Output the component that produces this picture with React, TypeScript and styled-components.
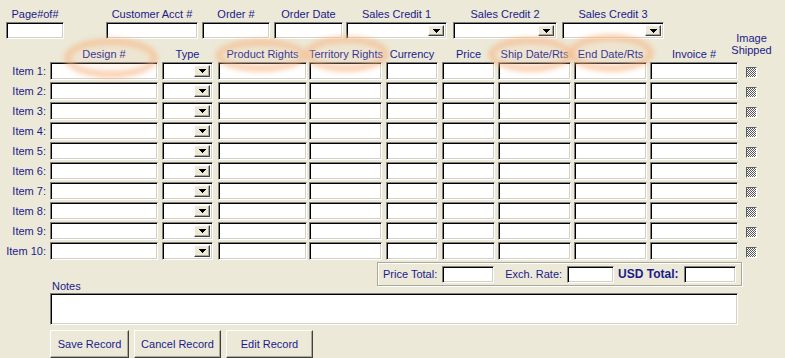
import React from "react";
import styled, { createGlobalStyle } from "styled-components";

const GlobalStyle = createGlobalStyle`
  html, body { margin: 0; padding: 0; background: #ece9d8; overflow: hidden; }
  body { font-family: "Liberation Sans", Arial, sans-serif; font-size: 11px; color: #1a1a8a; }
`;

const Form = styled.div`
  position: relative;
  width: 785px;
  height: 358px;
  overflow: hidden;
  background: #ece9d8;
`;

const TopRow = styled.div`
  display: flex;
  padding-top: 7px;
`;

const Field = styled.div<{ $w: number; $ml: number }>`
  display: flex;
  flex-direction: column;
  width: ${(p) => p.$w}px;
  margin-left: ${(p) => p.$ml}px;
`;

const FieldLabel = styled.div`
  line-height: 14px;
  height: 14px;
  text-align: center;
  white-space: nowrap;
  margin-bottom: 1px;
`;

const TextBox = styled.input<{ $w?: number; $h?: number }>`
  box-sizing: border-box;
  width: ${(p) => (p.$w ? `${p.$w}px` : "100%")};
  height: ${(p) => p.$h ?? 18}px;
  margin: 0;
  padding: 0 2px;
  background: #fff;
  border: 1px solid;
  border-color: #808080 #fff #fff #808080;
  box-shadow: inset 1px 1px 0 #000, inset -1px -1px 0 #d4d0c8;
  font: inherit;
  outline: none;
`;

const Combo = styled.div<{ $w?: number; $h?: number }>`
  box-sizing: border-box;
  display: flex;
  justify-content: flex-end;
  align-items: stretch;
  width: ${(p) => (p.$w ? `${p.$w}px` : "100%")};
  height: ${(p) => p.$h ?? 18}px;
  padding: 2px;
  background: #fff;
  border: 1px solid;
  border-color: #808080 #fff #fff #808080;
  box-shadow: inset 1px 1px 0 #000, inset -1px -1px 0 #d4d0c8;
`;

const DropButton = styled.div`
  box-sizing: border-box;
  width: 16px;
  display: flex;
  align-items: center;
  justify-content: center;
  background: #ece9d8;
  border: 1px solid;
  border-color: #fff #404040 #404040 #fff;
  box-shadow: inset -1px -1px 0 #aca899;
`;

const Arrow = () => (
  <svg width="7" height="4" viewBox="0 0 7 4" shapeRendering="crispEdges">
    <path d="M0 0h7v1H0zM1 1h5v1H1zM2 2h3v1H2zM3 3h1v1H3z" fill="#000" />
  </svg>
);

const ComboBox: React.FC<{ $w?: number; $h?: number }> = (p) => (
  <Combo $w={p.$w} $h={p.$h}>
    <DropButton>
      <Arrow />
    </DropButton>
  </Combo>
);

const ItemGrid = styled.div`
  display: grid;
  grid-template-columns: 50px 112px 56px 91px 77px 56px 56px 76px 76px 96px 11px;
  grid-template-rows: 23px repeat(10, 20px);
  align-items: start;
`;

const HeaderLabel = styled.div<{ $w: number }>`
  align-self: end;
  width: ${(p) => p.$w}px;
  line-height: 16px;
  text-align: center;
  white-space: nowrap;
`;

const ShippedHeader = styled.div`
  align-self: end;
  justify-self: center;
  margin-bottom: 6px;
  line-height: 12px;
  text-align: center;
  white-space: nowrap;
`;

const ItemLabel = styled.div`
  line-height: 18px;
  text-align: right;
  padding-right: 4px;
  white-space: nowrap;
`;

const CheckBox = styled.div`
  box-sizing: border-box;
  align-self: center;
  margin-top: 1px;
  width: 11px;
  height: 11px;
  border: 1px solid;
  border-color: #606060 #fff #fff #606060;
  background: repeating-conic-gradient(#555 0 25%, #fff 0 50%) 0 0 / 2px 2px;
`;

const BottomRow = styled.div`
  display: flex;
  align-items: flex-end;
  width: 742px;
  padding-left: 52px;
  box-sizing: border-box;
`;

const NotesLabel = styled.div`
  line-height: 12px;
`;

const TotalsPanel = styled.div`
  box-sizing: border-box;
  margin-left: auto;
  margin-bottom: 6px;
  width: 365px;
  height: 24px;
  display: flex;
  align-items: center;
  padding-left: 5px;
  border: 1px solid #aca899;
  box-shadow: inset 1px 1px 0 #fff, 1px 1px 0 #fff;
`;

const TotalsLabel = styled.span<{ $ml?: number; $bold?: boolean }>`
  margin-left: ${(p) => p.$ml ?? 0}px;
  margin-right: 5px;
  font-weight: ${(p) => (p.$bold ? 700 : 400)};
  font-size: ${(p) => (p.$bold ? 12 : 11)}px;
  white-space: nowrap;
`;

const NotesBox = styled.textarea`
  display: block;
  box-sizing: border-box;
  margin: 1px 0 0 50px;
  width: 688px;
  height: 32px;
  padding: 0;
  resize: none;
  background: #fff;
  border: 1px solid;
  border-color: #808080 #fff #fff #808080;
  box-shadow: inset 1px 1px 0 #000, inset -1px -1px 0 #d4d0c8;
  font: inherit;
  outline: none;
`;

const ButtonRow = styled.div`
  display: flex;
  gap: 5px;
  margin-top: 5px;
  padding-left: 50px;
`;

const FormButton = styled.button<{ $w: number }>`
  box-sizing: border-box;
  width: ${(p) => p.$w}px;
  height: 28px;
  margin: 0;
  padding: 0;
  background: #ece9d8;
  border: 1px solid;
  border-color: #fff #404040 #404040 #fff;
  box-shadow: inset -1px -1px 0 #aca899;
  font-family: "Liberation Sans", Arial, sans-serif;
  font-size: 11px;
  color: #1a1a8a;
`;

const Highlight = styled.div<{ $x: number; $y: number; $w: number; $h: number }>`
  position: absolute;
  left: ${(p) => p.$x}px;
  top: ${(p) => p.$y}px;
  width: ${(p) => p.$w}px;
  height: ${(p) => p.$h}px;
  box-sizing: border-box;
  border: 7px solid rgba(248, 178, 128, 0.55);
  background: rgba(250, 205, 170, 0.14);
  border-radius: 50%;
  filter: blur(2.5px);
  pointer-events: none;
`;

const columns = [
  { label: "Design #", w: 108 },
  { label: "Type", w: 51, combo: true },
  { label: "Product Rights", w: 89 },
  { label: "Territory Rights", w: 73 },
  { label: "Currency", w: 52 },
  { label: "Price", w: 53 },
  { label: "Ship Date/Rts", w: 73 },
  { label: "End Date/Rts", w: 73 },
  { label: "Invoice #", w: 88 },
];

const topFields = [
  { label: "Page#of#", w: 58, ml: 6 },
  { label: "Customer Acct #", w: 92, ml: 42 },
  { label: "Order #", w: 68, ml: 4 },
  { label: "Order Date", w: 69, ml: 4 },
  { label: "Sales Credit 1", w: 101, ml: 3, combo: true },
  { label: "Sales Credit 2", w: 104, ml: 6, combo: true },
  { label: "Sales Credit 3", w: 102, ml: 5, combo: true },
];

const highlights = [
  { x: 64, y: 38, w: 94, h: 40 },
  { x: 215, y: 39, w: 92, h: 33 },
  { x: 304, y: 36, w: 85, h: 36 },
  { x: 488, y: 37, w: 85, h: 35 },
  { x: 568, y: 34, w: 86, h: 38 },
];

export default function App() {
  const items = Array.from({ length: 10 }, (_, i) => i + 1);
  return (
    <>
      <GlobalStyle />
      <Form>
        <TopRow>
          {topFields.map((f) => (
            <Field key={f.label} $w={f.w} $ml={f.ml}>
              <FieldLabel>{f.label}</FieldLabel>
              {f.combo ? <ComboBox $h={17} /> : <TextBox readOnly $h={17} />}
            </Field>
          ))}
        </TopRow>

        <ItemGrid>
          <div />
          {columns.map((c) => (
            <HeaderLabel key={c.label} $w={c.w}>
              {c.label}
            </HeaderLabel>
          ))}
          <ShippedHeader>
            Image
            <br />
            Shipped
          </ShippedHeader>
          {items.map((n) => (
            <React.Fragment key={n}>
              <ItemLabel>Item {n}:</ItemLabel>
              {columns.map((c) =>
                c.combo ? (
                  <ComboBox key={c.label} $w={c.w} />
                ) : (
                  <TextBox key={c.label} readOnly $w={c.w} />
                )
              )}
              <CheckBox />
            </React.Fragment>
          ))}
        </ItemGrid>

        <BottomRow>
          <NotesLabel>Notes</NotesLabel>
          <TotalsPanel>
            <TotalsLabel>Price Total:</TotalsLabel>
            <TextBox readOnly $w={52} $h={17} />
            <TotalsLabel $ml={11}>Exch. Rate:</TotalsLabel>
            <TextBox readOnly $w={47} $h={17} />
            <TotalsLabel $ml={4} $bold>
              USD Total:
            </TotalsLabel>
            <TextBox readOnly $w={52} $h={17} />
          </TotalsPanel>
        </BottomRow>

        <NotesBox readOnly />

        <ButtonRow>
          <FormButton $w={79}>Save Record</FormButton>
          <FormButton $w={87}>Cancel Record</FormButton>
          <FormButton $w={87}>Edit Record</FormButton>
        </ButtonRow>

        {highlights.map((h, i) => (
          <Highlight key={i} $x={h.x} $y={h.y} $w={h.w} $h={h.h} />
        ))}
      </Form>
    </>
  );
}
